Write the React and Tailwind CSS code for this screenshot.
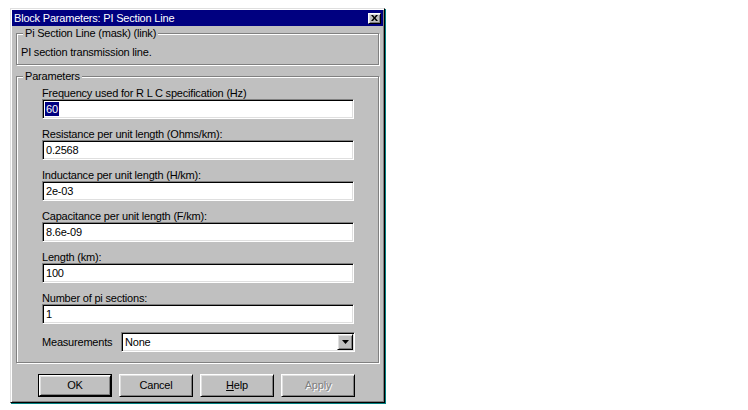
import React from "react";

const sunken =
  "border border-t-[#808080] border-l-[#808080] border-r-white border-b-white shadow-[inset_1px_1px_0_#000,inset_-1px_-1px_0_#dfdfdf]";
const raised =
  "border border-t-white border-l-white border-r-black border-b-black shadow-[inset_1px_1px_0_#dfdfdf,inset_-1px_-1px_0_#808080]";
const etched = "border border-[#808080] shadow-[inset_1px_1px_0_#fff,1px_1px_0_#fff]";

const fields = [
  { label: "Frequency used for R L C specification (Hz)", value: "60", selected: true },
  { label: "Resistance per unit length (Ohms/km):", value: "0.2568" },
  { label: "Inductance per unit length (H/km):", value: "2e-03" },
  { label: "Capacitance per unit length (F/km):", value: "8.6e-09" },
  { label: "Length (km):", value: "100" },
  { label: "Number of pi sections:", value: "1" },
];

function Field({ label, value, selected }) {
  return (
    <div className="flex flex-col">
      <div className="h-[12px] leading-[12px] whitespace-nowrap">{label}</div>
      <div className={`w-[312px] h-[20px] bg-white flex items-center pl-[2px] ${sunken}`}>
        {selected ? (
          <span className="bg-[#000080] text-white leading-[14px] px-[1px]">{value}</span>
        ) : (
          <span className="leading-[14px] pl-[1px]">{value}</span>
        )}
      </div>
    </div>
  );
}

function Button({ children, isDefault, disabled }) {
  const inner = (
    <div
      className={`w-full h-full flex items-center justify-center ${raised} ${
        disabled ? "text-[#808080] [text-shadow:1px_1px_0_#fff]" : ""
      }`}
    >
      {children}
    </div>
  );
  if (isDefault) {
    return <div className="w-[74px] h-[23px] border border-black">{inner}</div>;
  }
  return <div className="w-[74px] h-[23px]">{inner}</div>;
}

export default function App() {
  return (
    <div className="min-h-screen w-full bg-white pt-[8px] pl-[10px] [font-family:'Liberation_Sans',Arial,sans-serif] text-[11px] tracking-[-0.2px] text-black">
      <div className="w-[375px] h-[395px] bg-[#c0c0c0] p-[1px] border border-t-[#dfdfdf] border-l-[#dfdfdf] border-r-black border-b-black shadow-[inset_1px_1px_0_#fff,inset_-1px_-1px_0_#808080,1px_1px_0_#008080]">
        {/* title bar */}
        <div className="h-[16px] bg-[#000080] text-white flex items-center justify-between pl-[2px] pr-[2px]">
          <span className="leading-[14px] whitespace-nowrap">Block Parameters: PI Section Line</span>
          <div className={`w-[13px] h-[11px] bg-[#c0c0c0] flex items-center justify-center ${raised}`}>
            <svg width="7" height="6" viewBox="0 0 7 6">
              <path d="M0 0h2l1.5 2 1.5-2h2L4.5 3 7 6H5L3.5 4 2 6H0l2.5-3z" fill="#000" />
            </svg>
          </div>
        </div>

        {/* mask group */}
        <div className={`relative ml-[4px] mt-[7px] w-[363px] h-[32px] ${etched}`}>
          <span className="absolute left-[6px] top-[-7px] px-[2px] bg-[#c0c0c0] leading-[13px] whitespace-nowrap">
            Pi Section Line (mask) (link)
          </span>
          <div className="pl-[4px] pt-[12px] leading-[13px]">PI section transmission line.</div>
        </div>

        {/* parameters group */}
        <div className={`relative ml-[4px] mt-[11px] w-[363px] h-[287px] pl-[25px] pt-[10px] ${etched}`}>
          <span className="absolute left-[6px] top-[-7px] px-[2px] bg-[#c0c0c0] leading-[13px]">Parameters</span>
          <div className="flex flex-col gap-[9px]">
            {fields.map((f) => (
              <Field key={f.label} {...f} />
            ))}
          </div>
          <div className="flex items-center mt-[8px]">
            <div className="w-[79px] leading-[13px]">Measurements</div>
            <div className={`w-[234px] h-[20px] bg-white flex items-center justify-between pl-[2px] pr-[1px] ${sunken}`}>
              <span className="leading-[14px] pl-[1px]">None</span>
              <div className={`w-[16px] h-[16px] bg-[#c0c0c0] flex items-center justify-center ${raised}`}>
                <svg width="7" height="4" viewBox="0 0 7 4">
                  <path d="M0 0h7L3.5 4z" fill="#000" />
                </svg>
              </div>
            </div>
          </div>
        </div>

        {/* buttons */}
        <div className="flex gap-[7px] pl-[26px] mt-[11px]">
          <Button isDefault>OK</Button>
          <Button>Cancel</Button>
          <Button>
            <span>
              <span className="underline">H</span>elp
            </span>
          </Button>
          <Button disabled>Apply</Button>
        </div>
      </div>
    </div>
  );
}
